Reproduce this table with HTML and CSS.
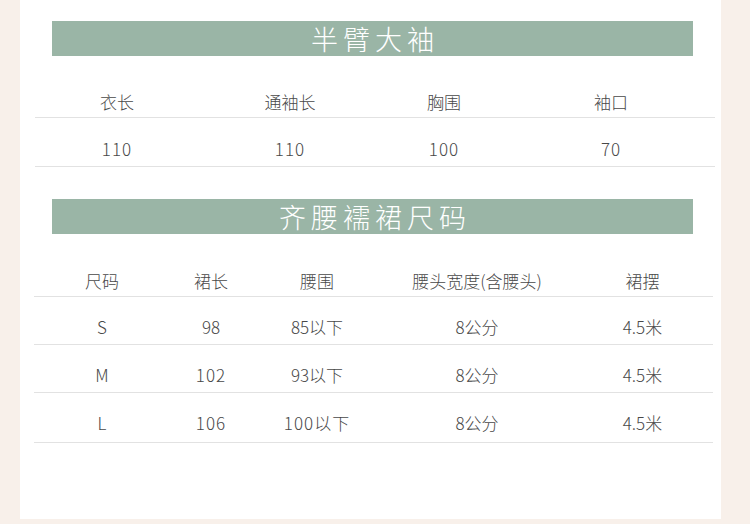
FILE: index.html
```html
<!DOCTYPE html>
<html lang="zh">
<head>
<meta charset="utf-8">
<title>尺码表</title>
<link rel="stylesheet" href="styles.css">
</head>
<body>
<div class="panel">
  <section class="block">
    <h2 class="bar">半臂大袖</h2>
    <div class="table t1">
      <div class="row head"><span>衣长</span><span>通袖长</span><span>胸围</span><span>袖口</span></div>
      <div class="row"><span class="num">110</span><span class="num">110</span><span class="num">100</span><span class="num">70</span></div>
    </div>
  </section>
  <section class="block second">
    <h2 class="bar">齐腰襦裙尺码</h2>
    <div class="table t2">
      <div class="row head"><span>尺码</span><span>裙长</span><span>腰围</span><span>腰头宽度(含腰头)</span><span>裙摆</span></div>
      <div class="row"><span>S</span><span>98</span><span>85以下</span><span>8公分</span><span>4.5米</span></div>
      <div class="row"><span>M</span><span class="num">102</span><span>93以下</span><span>8公分</span><span>4.5米</span></div>
      <div class="row last"><span>L</span><span class="num">106</span><span class="num">100以下</span><span>8公分</span><span>4.5米</span></div>
    </div>
  </section>
</div>
</body>
</html>
```

FILE: styles.css
```css
html, body {
  margin: 0;
  padding: 0;
}
body {
  background: #f8f0ea;
  width: 750px;
  height: 524px;
  overflow: hidden;
  font-family: "Noto Sans CJK SC", "Noto Sans", sans-serif;
  color: #484848;
}
.panel {
  margin-left: 20px;
  width: 701px;
  height: 519px;
  background: #ffffff;
  padding-top: 21px;
  box-sizing: border-box;
}
.block.second {
  margin-top: 32px;
}
.bar {
  margin: 0 0 0 32px;
  width: 641px;
  height: 35px;
  background: #9ab5a6;
  color: #ffffff;
  font-weight: 300;
  font-size: 27px;
  line-height: 35px;
  letter-spacing: 5px;
  padding-left: 5px;
  box-sizing: border-box;
  text-align: center;
}
.table {
  font-size: 17px;
  line-height: 17px;
  font-weight: 300;
}
.t1 {
  margin-top: 37px;
  margin-left: 15px;
  width: 680px;
}
.t2 {
  margin-top: 38px;
  margin-left: 14px;
  width: 679px;
}
.row {
  display: grid;
  text-align: center;
  border-bottom: 1px solid #e2e2e2;
  padding: 21px 0 9px;
}
.t1 .row {
  padding: 22px 0 9px;
}
.row.last {
  padding-bottom: 11px;
}
.t1 .row.head,
.row.head {
  padding: 0 0 7px;
}
.num {
  letter-spacing: 1px;
}
.t1 .row {
  grid-template-columns: 164px 182px 126px 208px;
}
.t2 .row {
  grid-template-columns: 136px 82px 130px 190px 141px;
}
```
